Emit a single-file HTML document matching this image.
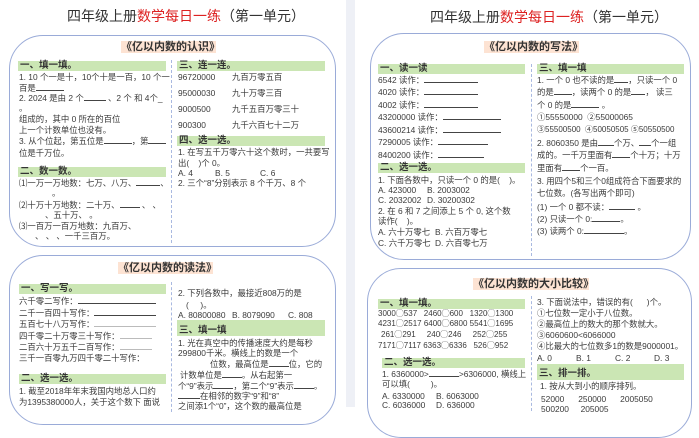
<!DOCTYPE html>
<html><head><meta charset="utf-8"><style>
*{margin:0;padding:0;box-sizing:border-box}
body{width:699px;height:407px;overflow:hidden;background:#fff;position:relative;font-family:"Liberation Sans","Noto Sans CJK SC",sans-serif;color:#333}
.gap{position:absolute;left:346px;top:0;width:9px;height:407px;background:#eef0f6}
.ttl{position:absolute;font-size:14px;color:#333;white-space:nowrap;line-height:16px}
.ttl span{color:#d22}
.box{position:absolute;border:1.3px solid #9aabd8;border-radius:34px}
.hd{position:absolute;background:#fde3d3;font-size:11px;line-height:12px;height:12px;white-space:nowrap;color:#333;font-weight:bold;text-align:center}
.g{position:absolute;background:#cbe6b4;font-size:9.5px;line-height:10px;height:10px;font-weight:bold;padding-left:2px;white-space:nowrap}
.t{position:absolute;font-size:8.4px;line-height:12px;white-space:nowrap;color:#3a3a3a}
.dv{position:absolute;border-left:1.3px dashed #a9b9e0;width:0}
u{text-decoration:none;border-bottom:1px solid #444;display:inline-block;height:9px}
</style></head><body>
<div class="gap"></div>

<!-- LEFT PAGE -->
<div class="ttl" style="left:67px;top:8px">四年级上册<span>数学每日一练</span>（第一单元）</div>
<div class="box" style="left:9px;top:35px;width:327px;height:212px"></div>
<div class="hd" style="left:121px;top:41px;width:95px">《亿以内数的认识》</div>
<div class="dv" style="left:171px;top:60px;height:183px"></div>
<div class="g" style="left:18px;top:61px;width:148px">一、填一填。</div>
<div class="t" style="left:19px;top:71px">1. 10 个一是十，10个十是一百，10 个一</div>
<div class="t" style="left:19px;top:82px">百是<u style="width:28px"></u></div>
<div class="t" style="left:19px;top:92px">2. 2024 是由 2 个<u style="width:22px"></u> 、2 个 和 4个_</div>
<div class="t" style="left:19px;top:102px">。</div>
<div class="t" style="left:19px;top:113px">组成的，其中 0 所在的百位</div>
<div class="t" style="left:19px;top:124px">上一个计数单位也没有。</div>
<div class="t" style="left:19px;top:135px">3. 从个位起，第五位是<u style="width:28px"></u>，第<u style="width:18px"></u></div>
<div class="t" style="left:19px;top:147px">位是千万位。</div>
<div class="g" style="left:18px;top:167px;width:148px">二、数一数。</div>
<div class="t" style="left:19px;top:177px">⑴一万一万地数：七万、八万、<u style="width:24px"></u>、</div>
<div class="t" style="left:52px;top:187px">。</div>
<div class="t" style="left:19px;top:199px">⑵十万十万地数：二十万、<u style="width:20px"></u> 、 、</div>
<div class="t" style="left:45px;top:209px">、五十万、 。</div>
<div class="t" style="left:19px;top:220px">⑶一百万一百万地数：九百万、</div>
<div class="t" style="left:35px;top:230px">、 、 、一千三百万。</div>

<div class="g" style="left:177px;top:61px;width:148px">三、连一连。</div>
<div class="t" style="left:178px;top:71px">96720000</div><div class="t" style="left:232px;top:71px">九百万零五百</div>
<div class="t" style="left:178px;top:87px">95000030</div><div class="t" style="left:232px;top:87px">九十万零三百</div>
<div class="t" style="left:178px;top:103px">9000500</div><div class="t" style="left:232px;top:103px">九千五百万零三十</div>
<div class="t" style="left:178px;top:119px">900300</div><div class="t" style="left:232px;top:119px">九千六百七十二万</div>
<div class="g" style="left:177px;top:136px;width:148px">四、选一选。</div>
<div class="t" style="left:178px;top:146px">1. 在写五千万零六十这个数时，一共要写</div>
<div class="t" style="left:178px;top:157px">出(&nbsp;&nbsp;&nbsp;&nbsp;)个 0。</div>
<div class="t" style="left:178px;top:167px">A. 4</div><div class="t" style="left:215px;top:167px">B. 5</div><div class="t" style="left:260px;top:167px">C. 6</div>
<div class="t" style="left:178px;top:177px">2. 三个“8”分别表示 8 个千万、8 个</div>

<div class="box" style="left:9px;top:255px;width:327px;height:170px"></div>
<div class="hd" style="left:118px;top:262px;width:95px">《亿以内数的读法》</div>
<div class="dv" style="left:171px;top:282px;height:130px"></div>
<div class="g" style="left:19px;top:284px;width:147px">一、写一写。</div>
<div class="t" style="left:19px;top:295px">六千零二写作：<u style="width:78px"></u></div>
<div class="t" style="left:19px;top:307px">二千一百四十写作：<u style="width:62px"></u></div>
<div class="t" style="left:19px;top:318px">五百七十八万写作：<u style="width:62px;border-color:#bbb"></u></div>
<div class="t" style="left:19px;top:330px">四千零二十万零三十写作：<u style="width:32px;border-color:#bbb"></u></div>
<div class="t" style="left:19px;top:341px">二百六十万五千二百写作：<u style="width:32px;border-color:#bbb"></u></div>
<div class="t" style="left:19px;top:352px">三千一百零九万四千零二十写作：</div>
<div class="g" style="left:19px;top:374px;width:147px">二、选一选。</div>
<div class="t" style="left:19px;top:385px">1. 截至2018年年末我国内地总人口约</div>
<div class="t" style="left:19px;top:396px">为1395380000人，关于这个数下 面说</div>

<div class="t" style="left:178px;top:287px">2. 下列各数中，最接近808万的是</div>
<div class="t" style="left:186px;top:299px">(&nbsp;&nbsp;&nbsp;&nbsp;&nbsp;)。</div>
<div class="t" style="left:178px;top:309px">A. 80800080</div><div class="t" style="left:232px;top:309px">B. 8079090</div><div class="t" style="left:288px;top:309px">C. 808</div>
<div class="g" style="left:177px;top:320px;width:148px;height:16px;line-height:22px">三、填一填</div>
<div class="t" style="left:178px;top:337px">1. 光在真空中的传播速度大约是每秒</div>
<div class="t" style="left:178px;top:347px">299800千米。横线上的数是一个</div>
<div class="t" style="left:182px;top:358px"><u style="width:28px;border:0"></u>位数，最高位是<u style="width:20px"></u>位，它的</div>
<div class="t" style="left:180px;top:369px">计数单位是<u style="width:20px"></u>。从右起第一</div>
<div class="t" style="left:178px;top:380px">个“9”表示<u style="width:20px"></u>，第二个“9”表示<u style="width:20px"></u>。</div>
<div class="t" style="left:178px;top:390px"><u style="width:22px"></u>在相邻的数字“9”和“8”</div>
<div class="t" style="left:178px;top:400px">之间添1个“0”，这个数的最高位是</div>

<!-- RIGHT PAGE -->
<div class="ttl" style="left:430px;top:9px">四年级上册<span>数学每日一练</span>（第一单元）</div>
<div class="box" style="left:370px;top:33px;width:321px;height:227px"></div>
<div class="hd" style="left:484px;top:41px;width:95px">《亿以内数的写法》</div>
<div class="dv" style="left:531px;top:64px;height:192px"></div>
<div class="g" style="left:378px;top:64px;width:147px">一、读一读</div>
<div class="t" style="left:378px;top:74px">6542 读作：<u style="width:54px"></u></div>
<div class="t" style="left:378px;top:86px">4020 读作：<u style="width:54px"></u></div>
<div class="t" style="left:378px;top:99px">4002 读作：<u style="width:54px"></u></div>
<div class="t" style="left:378px;top:111px">43200000 读作：<u style="width:58px"></u></div>
<div class="t" style="left:378px;top:124px">43600214 读作：<u style="width:58px"></u></div>
<div class="t" style="left:378px;top:136px">7290005 读作：<u style="width:50px"></u></div>
<div class="t" style="left:378px;top:149px">8400200 读作：<u style="width:46px"></u></div>
<div class="g" style="left:378px;top:163px;width:147px">二、选一选。</div>
<div class="t" style="left:378px;top:174px">1. 下面各数中，只读一个 0 的是(&nbsp;&nbsp;&nbsp;&nbsp;)。</div>
<div class="t" style="left:378px;top:184px">A. 423000</div><div class="t" style="left:427px;top:184px">B. 2003002</div>
<div class="t" style="left:378px;top:194px">C. 2032002</div><div class="t" style="left:427px;top:194px">D. 30200302</div>
<div class="t" style="left:378px;top:205px">2. 在 6 和 7 之间添上 5 个 0, 这个数</div>
<div class="t" style="left:378px;top:215px">读作(&nbsp;&nbsp;&nbsp;&nbsp;)。</div>
<div class="t" style="left:378px;top:226px">A. 六十万零七</div><div class="t" style="left:435px;top:226px">B. 六百万零七</div>
<div class="t" style="left:378px;top:237px">C. 六千万零七</div><div class="t" style="left:435px;top:237px">D. 六百零七万</div>

<div class="g" style="left:537px;top:64px;width:147px">三、填一填</div>
<div class="t" style="left:537px;top:74px">1. 一个 0 也不读的是<u style="width:14px"></u>，只读一个 0</div>
<div class="t" style="left:537px;top:86px">的是<u style="width:18px"></u>，读两个 0 的是<u style="width:14px"></u>， 读三</div>
<div class="t" style="left:537px;top:99px">个 0 的是<u style="width:28px"></u> 。</div>
<div class="t" style="left:537px;top:111px">①55550000 &nbsp;②55000065</div>
<div class="t" style="left:537px;top:124px;font-size:8px">③55500500 &nbsp;④50050505 ⑤50550500</div>
<div class="t" style="left:537px;top:137px">2. 8060350 是由<u style="width:16px"></u>个万、<u style="width:12px"></u>个一组</div>
<div class="t" style="left:537px;top:149px">成的。一千万里面有<u style="width:18px"></u>个十万；十万</div>
<div class="t" style="left:537px;top:162px">里面有<u style="width:18px"></u>个一百。</div>
<div class="t" style="left:537px;top:175px">3. 用四个5和三个0组成符合下面要求的</div>
<div class="t" style="left:537px;top:187px">七位数。(各写出两个即可)</div>
<div class="t" style="left:537px;top:201px">(1) 一个 0 都不读：<u style="width:26px"></u> 。</div>
<div class="t" style="left:537px;top:213px">(2) 只读一个 0:<u style="width:28px"></u>。</div>
<div class="t" style="left:537px;top:225px">(3) 读两个 0:<u style="width:40px"></u>。</div>

<div class="box" style="left:367px;top:268px;width:325px;height:170px"></div>
<div class="hd" style="left:473px;top:278px;width:116px">《亿以内数的大小比较》</div>
<div class="dv" style="left:531px;top:296px;height:115px"></div>
<div class="g" style="left:378px;top:299px;width:147px">一、填一填。</div>
<div class="t" style="left:378px;top:308px;font-size:8px">3000◯537 &nbsp;&nbsp;2460◯600 &nbsp;&nbsp;1320◯1300</div>
<div class="t" style="left:378px;top:318px;font-size:8px">4231◯2517 6400◯6800 5541◯1695</div>
<div class="t" style="left:381px;top:329px;font-size:8px">261◯291 &nbsp;&nbsp;&nbsp;&nbsp;240◯246 &nbsp;&nbsp;&nbsp;&nbsp;252◯255</div>
<div class="t" style="left:378px;top:340px;font-size:8px">7171◯7117 6363◯6336 &nbsp;&nbsp;526◯952</div>
<div class="g" style="left:382px;top:358px;width:143px">二、选一选。</div>
<div class="t" style="left:382px;top:368px">1. 6360000&gt;<u style="width:30px"></u>&gt;6306000, 横线上</div>
<div class="t" style="left:382px;top:378px">可以填(&nbsp;&nbsp;&nbsp;&nbsp;&nbsp;&nbsp;&nbsp;&nbsp;&nbsp;)。</div>
<div class="t" style="left:382px;top:390px">A. 6330000</div><div class="t" style="left:436px;top:390px">B. 6063000</div>
<div class="t" style="left:382px;top:399px">C. 6036000</div><div class="t" style="left:436px;top:399px">D. 636000</div>

<div class="t" style="left:537px;top:296px">3. 下面说法中，错误的有(&nbsp;&nbsp;&nbsp;&nbsp;&nbsp;&nbsp;)个。</div>
<div class="t" style="left:537px;top:307px">①七位数一定小于八位数。</div>
<div class="t" style="left:537px;top:318px">②最高位上的数大的那个数就大。</div>
<div class="t" style="left:537px;top:329px">③6060600&lt;6066000</div>
<div class="t" style="left:537px;top:340px">④比最大的七位数多1的数是9000001。</div>
<div class="t" style="left:537px;top:352px">A. 0</div><div class="t" style="left:576px;top:352px">B. 1</div><div class="t" style="left:615px;top:352px">C. 2</div><div class="t" style="left:654px;top:352px">D. 3</div>
<div class="g" style="left:537px;top:364px;width:147px;height:16px;line-height:20px">三、排一排。</div>
<div class="t" style="left:540px;top:380px">1. 按从大到小的顺序排列。</div>
<div class="t" style="left:541px;top:393px">52000 &nbsp;&nbsp;&nbsp;&nbsp;&nbsp;250000 &nbsp;&nbsp;&nbsp;&nbsp;&nbsp;2005050</div>
<div class="t" style="left:541px;top:403px">500200 &nbsp;&nbsp;&nbsp;&nbsp;205005</div>
</body></html>
